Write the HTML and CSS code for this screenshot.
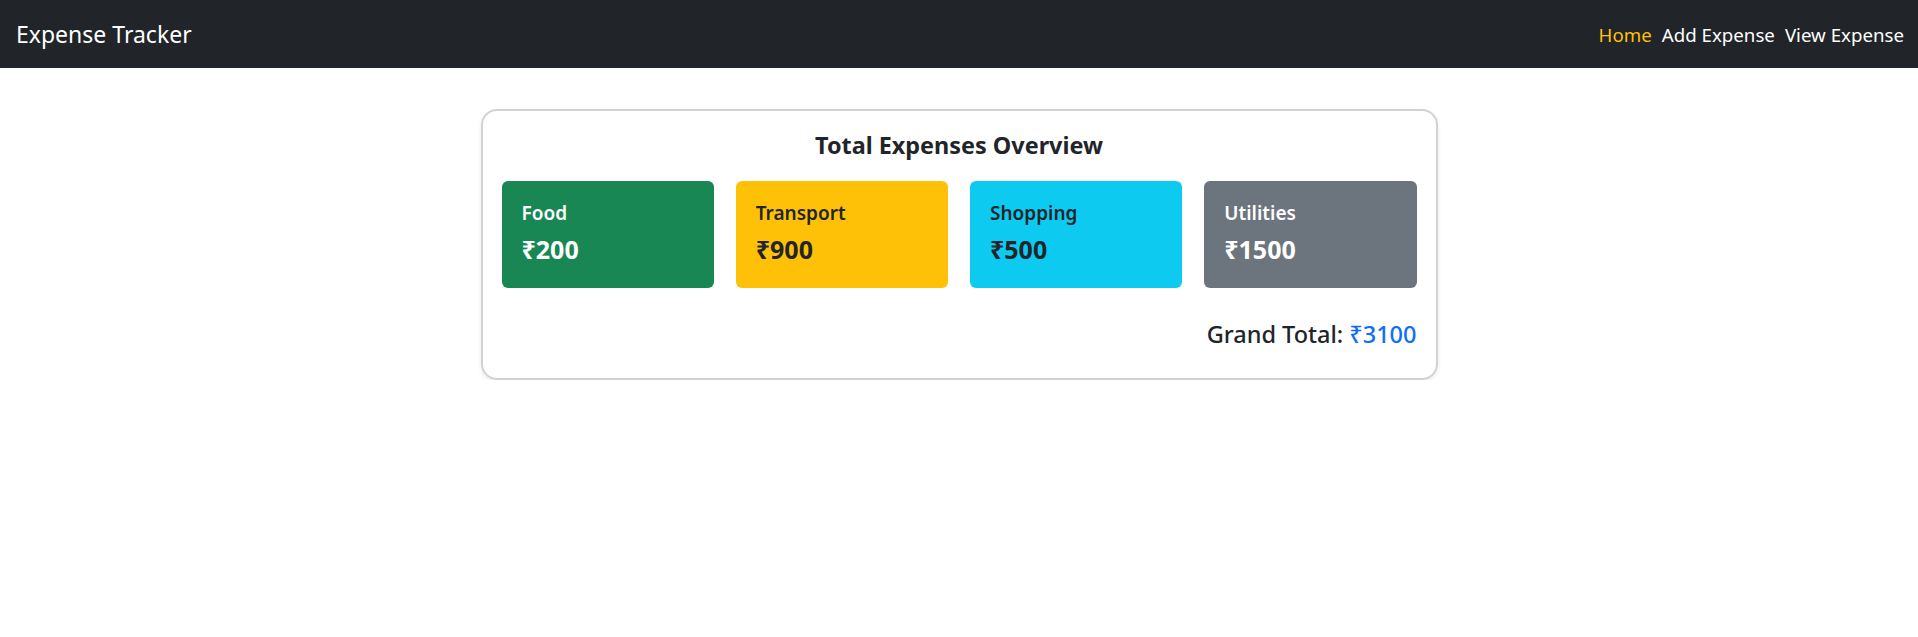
FILE: index.html
```html
<!DOCTYPE html>
<html lang="en">
<head>
<meta charset="utf-8">
<title>Expense Tracker</title>
<link rel="stylesheet" href="styles.css">
</head>
<body>
<nav class="navbar">
  <a class="brand" href="#">Expense Tracker</a>
  <div class="nav-links">
    <a class="nav-link active" href="#">Home</a>
    <a class="nav-link" href="#">Add Expense</a>
    <a class="nav-link" href="#">View Expense</a>
  </div>
</nav>
<main class="main">
  <section class="overview">
    <h2 class="overview-title">Total Expenses Overview</h2>
    <div class="tiles">
      <div class="tile tile-food">
        <div class="tile-label">Food</div>
        <div class="tile-amount">₹200</div>
      </div>
      <div class="tile tile-transport">
        <div class="tile-label">Transport</div>
        <div class="tile-amount">₹900</div>
      </div>
      <div class="tile tile-shopping">
        <div class="tile-label">Shopping</div>
        <div class="tile-amount">₹500</div>
      </div>
      <div class="tile tile-utilities">
        <div class="tile-label">Utilities</div>
        <div class="tile-amount">₹1500</div>
      </div>
    </div>
    <div class="grand-total">Grand Total: <span class="grand-amount">₹3100</span></div>
  </section>
</main>
</body>
</html>
```
FILE: styles.css
```css
* { box-sizing: border-box; }
html, body { margin: 0; padding: 0; }
body {
  font-family: "Noto Sans", "Open Sans", sans-serif;
  color: #212529;
  background: #fff;
  font-size: 20px;
}
.navbar {
  background: #212529;
  height: 68px;
  display: flex;
  align-items: center;
  justify-content: space-between;
  padding: 0 14px 0 16px;
}
.brand {
  color: #fff;
  text-decoration: none;
  font-size: 23px;
  line-height: 1;
}
.nav-links {
  display: flex;
  gap: 10px;
}
.nav-link {
  color: #fff;
  text-decoration: none;
  font-size: 18.7px;
}
.nav-link.active { color: #ffc107; }
.main {
  padding-top: 41px;
  display: flex;
  justify-content: center;
}
.overview {
  width: 957px;
  height: 271px;
  border: 2px solid #d2d2d2;
  border-radius: 16px;
  box-shadow: 0 2px 4px rgba(0,0,0,0.08);
  padding: 19px 19px 0;
}
.overview-title {
  margin: 0;
  text-align: center;
  font-size: 23.4px;
  font-weight: 700;
  line-height: 30px;
}
.tiles {
  margin-top: 21px;
  display: grid;
  grid-template-columns: repeat(4, 1fr);
  gap: 22px;
}
.tile {
  height: 107px;
  border-radius: 6px;
  padding: 20px 20px 0;
}
.tile-label {
  font-size: 19px;
  font-weight: 600;
  line-height: 24px;
}
.tile-amount {
  margin-top: 9px;
  font-size: 25px;
  font-weight: 700;
  line-height: 30px;
}
.tile-food { background: #198754; color: #fff; }
.tile-transport { background: #ffc107; color: #212529; }
.tile-shopping { background: #0dcaf0; color: #212529; }
.tile-utilities { background: #6c757d; color: #fff; }
.grand-total {
  margin-top: 31px;
  text-align: right;
  font-size: 23.5px;
  font-weight: 500;
  line-height: 30px;
}
.grand-amount { color: #0d6efd; }
```
